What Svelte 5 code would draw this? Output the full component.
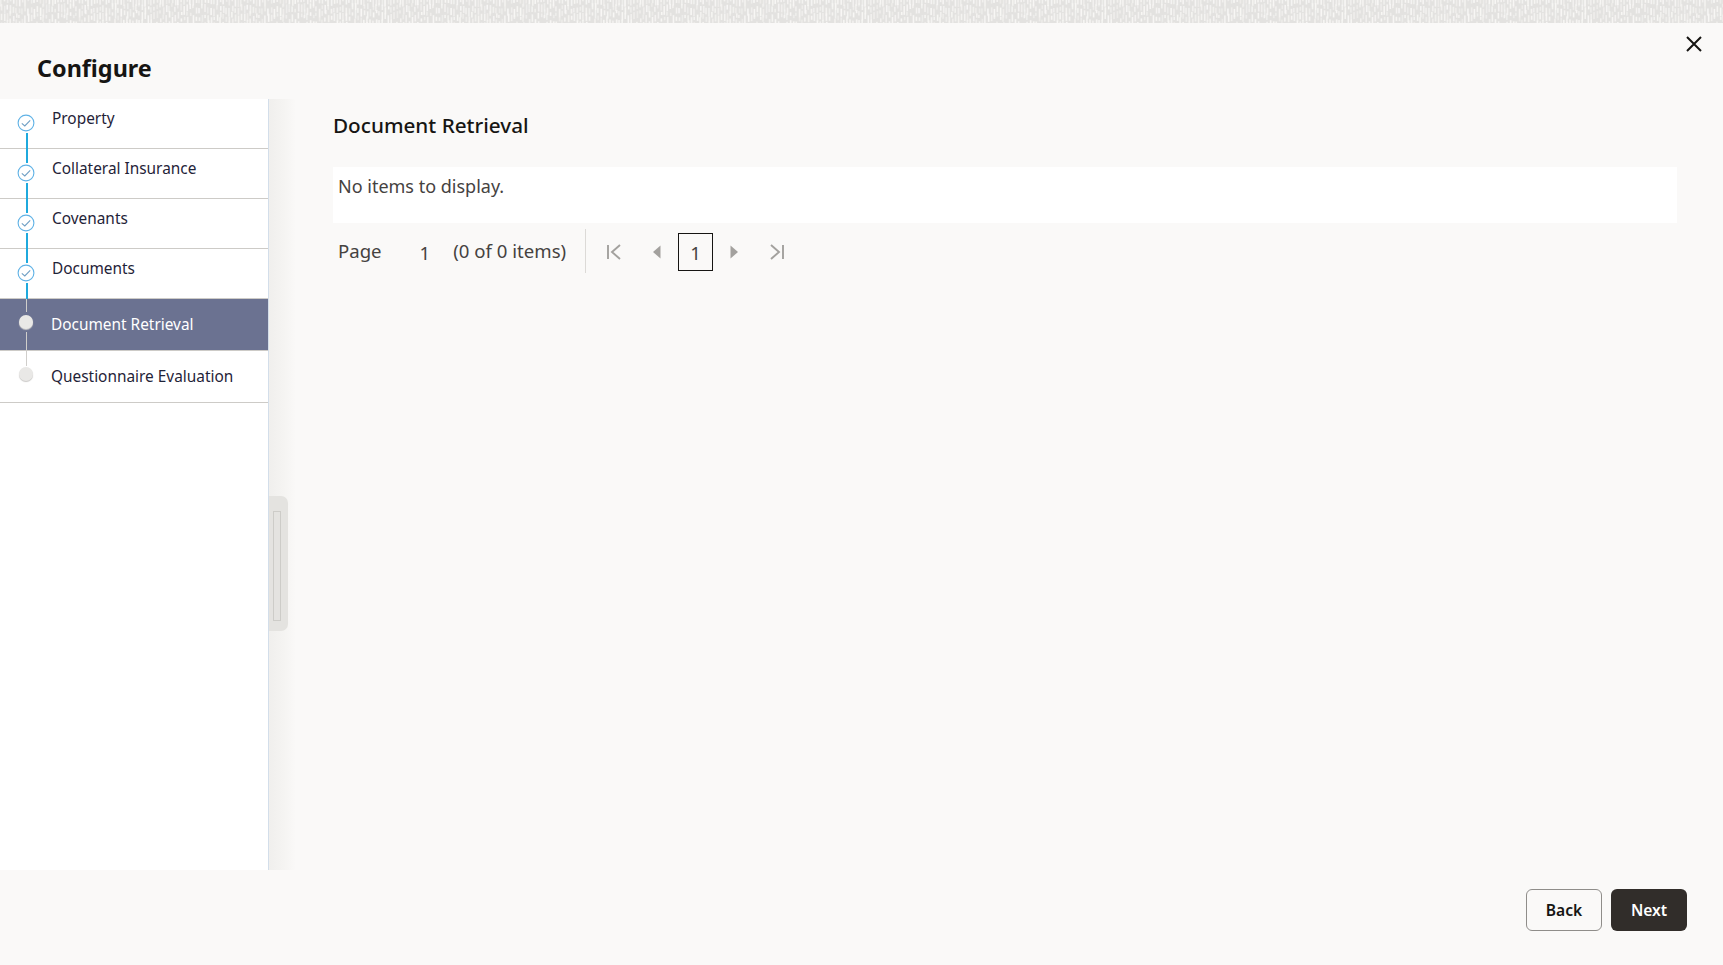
<script>
  const steps = [
    { label: 'Property', state: 'done' },
    { label: 'Collateral Insurance', state: 'done' },
    { label: 'Covenants', state: 'done' },
    { label: 'Documents', state: 'done' },
    { label: 'Document Retrieval', state: 'active' },
    { label: 'Questionnaire Evaluation', state: 'todo' }
  ];
  let seed = 7;
  const rnd = () => (seed = (seed * 16807) % 2147483647) / 2147483647;
  const marks = [];
  for (let x = 0; x < 240; x += 3) {
    for (let y = -2; y < 24; y += 5 + rnd() * 6) {
      marks.push({ x: x + rnd(), y, h: 3 + rnd() * 6, o: 0.45 + rnd() * 0.55 });
    }
  }
</script>

<div class="page">
  <svg class="strip" aria-hidden="true">
    <defs>
      <pattern id="weave" width="240" height="23" patternUnits="userSpaceOnUse">
        {#each marks as m}
          <rect x={m.x} y={m.y} width="1.6" height={m.h} fill="#f8f7f5" opacity={m.o} />
        {/each}
      </pattern>
    </defs>
    <rect width="100%" height="23" fill="#e3e2e0" />
    <rect width="100%" height="23" fill="url(#weave)" />
  </svg>

  <div class="dialog">
    <header class="head">
      <h1>Configure</h1>
      <button class="close" aria-label="Close">
        <svg width="18" height="18" viewBox="0 0 18 18"><path d="M2 2 16 16M16 2 2 16" stroke="#161513" stroke-width="2" fill="none" /></svg>
      </button>
    </header>

    <div class="body">
      <nav class="side">
        {#each steps as s, i}
          <div class="step {s.state}" class:last={i === steps.length - 1}>
            <span class="mark">
              {#if s.state === 'done'}
                <svg width="18" height="18" viewBox="0 0 18 18">
                  <circle cx="9" cy="9" r="7.9" fill="#fff" stroke="#5fb2e6" stroke-width="1.1" />
                  <path d="M4.8 9.4 7.8 12 13.2 6.4" fill="none" stroke="#6f9fc4" stroke-width="1.1" />
                </svg>
              {:else}
                <span class="dot"></span>
              {/if}
            </span>
            <span class="label">{s.label}</span>
          </div>
        {/each}
      </nav>

      <div class="splitter">
        <div class="grip"><span></span></div>
      </div>

      <main class="main">
        <h2>Document Retrieval</h2>
        <div class="table">No items to display.</div>
        <div class="pager">
          <span class="page-word">Page</span>
          <span class="page-num">1</span>
          <span class="count">(0 of 0 items)</span>
          <span class="sep"></span>
          <svg class="ico first" width="16" height="16" viewBox="0 0 16 16"><path d="M2 1V15M14 1 6 8 14 15" fill="none" stroke="#a3a19e" stroke-width="1.9" /></svg>
          <svg class="ico prev" width="10" height="14" viewBox="0 0 10 14"><path d="M8.5 .5V13.5L1 7Z" fill="#a3a19e" /></svg>
          <span class="current">1</span>
          <svg class="ico next" width="10" height="14" viewBox="0 0 10 14"><path d="M1.5 .5V13.5L9 7Z" fill="#a3a19e" /></svg>
          <svg class="ico last-ico" width="16" height="16" viewBox="0 0 16 16"><path d="M14 1V15M2 1 10 8 2 15" fill="none" stroke="#a3a19e" stroke-width="1.9" /></svg>
        </div>
      </main>
    </div>

    <footer class="foot">
      <button class="btn back">Back</button>
      <button class="btn nextb">Next</button>
    </footer>
  </div>
</div>

<style>
  :global(body) {
    margin: 0;
    background: #faf9f8;
    font-family: "Noto Sans", "Open Sans", sans-serif;
    color: #161513;
  }
  .page {
    height: 965px;
    width: 1723px;
    display: flex;
    flex-direction: column;
    overflow: hidden;
  }
  .strip {
    display: block;
    width: 100%;
    height: 23px;
    flex: none;
  }
  .dialog {
    flex: 1;
    display: flex;
    flex-direction: column;
    background: #faf9f8;
    min-height: 0;
  }
  .head {
    height: 76px;
    flex: none;
    position: relative;
    display: flex;
    align-items: flex-start;
    padding-left: 37px;
  }
  h1 {
    margin: 29px 0 0;
    font-size: 23.4px;
    line-height: 32px;
    font-weight: 700;
  }
  .close {
    position: absolute;
    right: 20px;
    top: 12px;
    width: 18px;
    height: 18px;
    padding: 0;
    border: 0;
    background: none;
    display: flex;
  }
  .body {
    flex: none;
    height: 771px;
    display: flex;
  }
  .side {
    width: 268px;
    flex: none;
    background: #fff;
    border-right: 1px solid #d3deea;
  }
  .step {
    position: relative;
    height: 49px;
    border-bottom: 1px solid #cdcbc7;
    display: flex;
    align-items: flex-start;
    padding-left: 17px;
    font-size: 15.4px;
    line-height: 22px;
    color: #1f2338;
  }
  .step.active,
  .step.todo {
    height: 51px;
    padding-left: 17px;
    align-items: center;
  }
  .step.active {
    background: #6b7291;
    color: #fff;
  }
  .mark {
    width: 18px;
    height: 18px;
    display: flex;
    align-items: center;
    justify-content: center;
    position: relative;
    z-index: 1;
    margin-top: 15px;
  }
  .step.active .mark {
    margin-top: -5px;
  }
  .step.todo .mark {
    margin-top: -5px;
  }
  .dot {
    width: 14px;
    height: 14px;
    border-radius: 50%;
    background: #e9e8e6;
    box-shadow: 0 1px 1px #c9c8c6;
  }
  .label {
    margin: 9px 0 0 17px;
  }
  .step.active .label,
  .step.todo .label {
    margin: 0 0 0 16px;
  }
  .step.done::after {
    content: "";
    position: absolute;
    left: 25.5px;
    top: 34px;
    height: 30px;
    width: 2px;
    background: #1fa9dd;
  }
  .step.active::after {
    content: "";
    position: absolute;
    left: 26px;
    top: 33px;
    height: 34px;
    width: 1px;
    background: #d0cecb;
  }
  .step.active::before {
    content: "";
    position: absolute;
    left: 26px;
    top: 0;
    height: 13px;
    width: 1px;
    background: #d0cecb;
  }
  .splitter {
    width: 27px;
    flex: none;
    background: linear-gradient(to right, #f0efed, #f5f4f2 55%, #faf9f8);
    display: flex;
    align-items: flex-start;
  }
  .grip {
    width: 19px;
    height: 135px;
    margin-top: 397px;
    background: #e4e3e0;
    border-radius: 0 7px 7px 0;
    display: flex;
    align-items: flex-start;
    padding: 15px 0 0 4px;
    box-sizing: border-box;
  }
  .grip span {
    display: block;
    width: 6px;
    height: 108px;
    border: 1px solid #cdccc8;
  }
  .main {
    flex: 1;
    padding: 0 46px 0 37px;
    min-width: 0;
  }
  h2 {
    margin: 12px 0 0;
    font-size: 20.7px;
    line-height: 28px;
    font-weight: 500;
  }
  .table {
    margin-top: 28px;
    height: 56px;
    background: #fff;
    padding: 7px 5px 0;
    box-sizing: border-box;
    font-size: 18px;
    line-height: 24px;
    color: #45423f;
  }
  .pager {
    margin-top: 5px;
    height: 48px;
    display: flex;
    align-items: center;
    font-size: 18.6px;
    color: #45423f;
    padding-left: 5px;
  }
  .page-word, .count { margin-top: -3px; }
  .page-num { margin-left: 38px; }
  .count { margin-left: 23px; }
  .sep {
    width: 1px;
    height: 44px;
    background: #dcdad7;
    margin-left: 19px;
    margin-top: -3px;
  }
  .ico { flex: none; }
  .first { margin-left: 20px; }
  .prev { margin-left: 30px; }
  .current {
    width: 33px;
    height: 36px;
    margin-left: 16px;
    border: 1px solid #161513;
    display: flex;
    align-items: center;
    justify-content: center;
  }
  .next { margin-left: 16px; }
  .last-ico { margin-left: 30px; }
  .foot {
    flex: 1;
    display: flex;
    justify-content: flex-end;
    gap: 9px;
    padding: 19px 36px 0 0;
  }
  .btn {
    width: 76px;
    height: 42px;
    border-radius: 6px;
    font: 600 15.6px "Noto Sans", sans-serif;
    padding: 0;
  }
  .back {
    background: transparent;
    border: 1px solid #8f8d8a;
    color: #161513;
  }
  .nextb {
    background: #312d2a;
    border: 0;
    color: #fff;
  }
</style>
